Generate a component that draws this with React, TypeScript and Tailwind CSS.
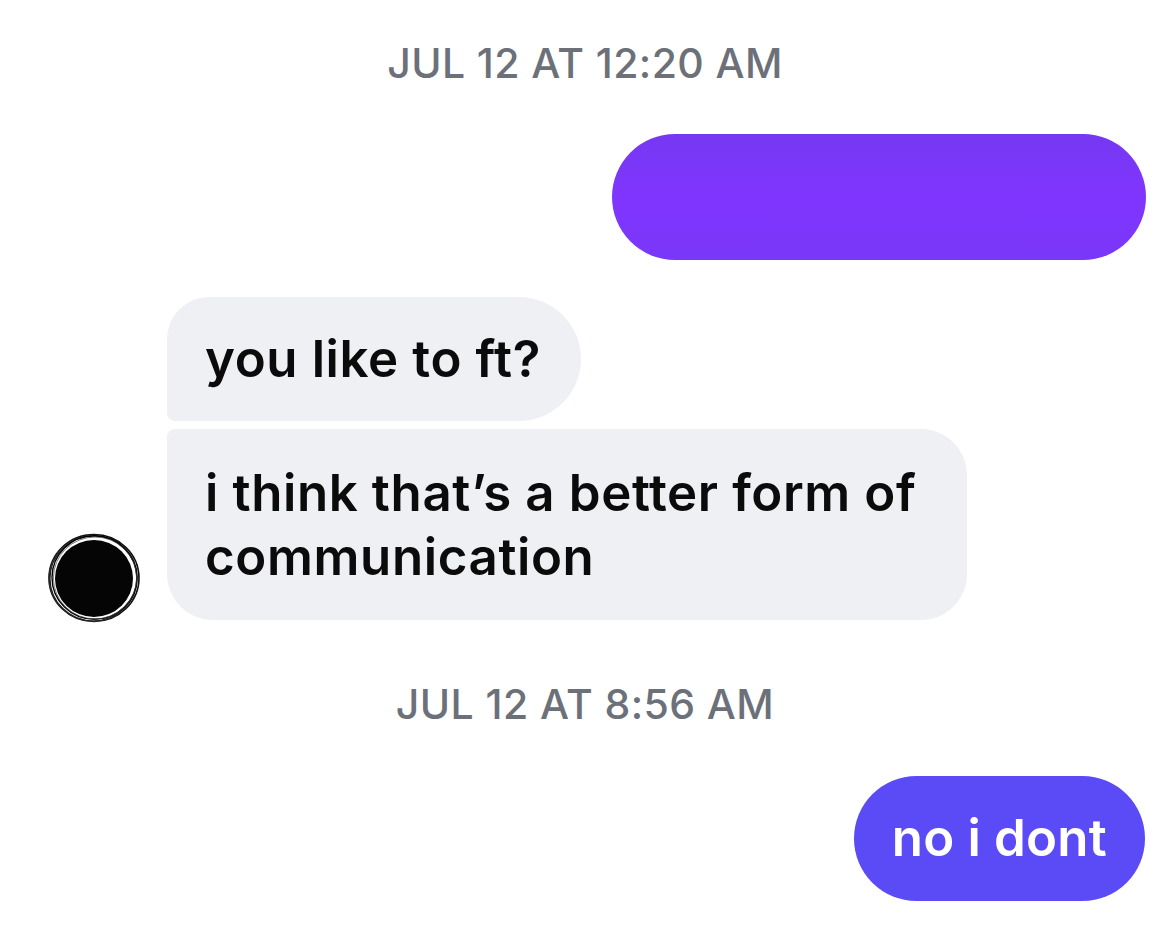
import React from 'react';

const Timestamp: React.FC<{ label: string }> = ({ label }) => (
  <div className="text-center text-[41px] leading-none font-medium tracking-[0.01em] text-[#6c7079]">
    {label}
  </div>
);

// scribbly black avatar, drawn as a few offset rings around a filled dot
const Avatar = () => (
  <svg width="94" height="92" viewBox="0 0 94 92" className="shrink-0">
    <ellipse cx="47" cy="46" rx="45" ry="43.5" fill="none" stroke="#111" strokeWidth="1.6" />
    <ellipse cx="46" cy="46.5" rx="44" ry="42.8" fill="none" stroke="#333" strokeWidth="0.8" />
    <ellipse cx="46.5" cy="46.5" rx="43.5" ry="42.5" fill="none" stroke="#222" strokeWidth="1.2" />
    <ellipse cx="47.5" cy="45.5" rx="42.5" ry="41.8" fill="none" stroke="#000" strokeWidth="1.4" />
    <ellipse cx="48" cy="46" rx="41.6" ry="41" fill="none" stroke="#444" strokeWidth="0.7" />
    <ellipse cx="47" cy="46.5" rx="39" ry="38.5" fill="#050505" />
  </svg>
);

export default function App() {
  return (
    <div
      className="w-[1170px] h-[938px] bg-white overflow-hidden flex flex-col [font-variant-ligatures:none]"
      style={{ fontFamily: 'Inter, "Noto Sans", sans-serif' }}
    >
      <div className="pt-[43px]">
        <Timestamp label="JUL 12 AT 12:20 AM" />
      </div>

      {/* sent, hidden text */}
      <div className="flex justify-end pr-[24px] mt-[50px]">
        <div className="w-[534px] h-[126px] rounded-full bg-gradient-to-b from-[#7538f2] via-[#8035fe] to-[#7a37f8]" />
      </div>

      {/* received group */}
      <div className="flex items-end gap-[26px] pl-[47px] mt-[37px]">
        <div className="mb-[-4px]">
          <Avatar />
        </div>
        <div className="flex flex-col items-start gap-[8px] text-[#0b0b0c] font-semibold text-[51px] leading-[64px] tracking-[0.012em]">
          <div className="h-[124px] flex items-center pl-[38px] pr-[40px] bg-[#eff0f4] rounded-tl-[42px] rounded-bl-[8px] rounded-r-[62px]">
            you like to ft?
          </div>
          <div className="w-[800px] h-[191px] flex items-center pl-[38px] pr-[40px] bg-[#eff0f4] rounded-tl-[8px] rounded-bl-[46px] rounded-r-[46px]">
            <span>
              i think that’s a better form of
              <br />
              communication
            </span>
          </div>
        </div>
      </div>

      <div className="mt-[64px]">
        <Timestamp label="JUL 12 AT 8:56 AM" />
      </div>

      <div className="flex justify-end pr-[25px] mt-[51px]">
        <div className="h-[125px] px-[38px] flex items-center rounded-full bg-[#5b4bf6] text-white font-semibold text-[51px] tracking-[0.004em]">
          no i dont
        </div>
      </div>
    </div>
  );
}
